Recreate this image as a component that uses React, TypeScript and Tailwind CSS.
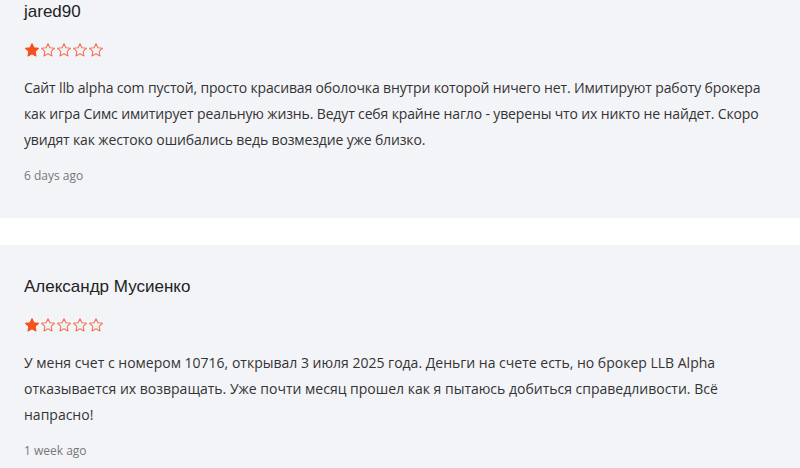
const reviews = [
  {
    name: 'jared90',
    rating: 1,
    text: 'Сайт llb alpha com пустой, просто красивая оболочка внутри которой ничего нет. Имитируют работу брокера как игра Симс имитирует реальную жизнь. Ведут себя крайне нагло - уверены что их никто не найдет. Скоро увидят как жестоко ошибались ведь возмездие уже близко.',
    date: '6 days ago',
    tight: true,
  },
  {
    name: 'Александр Мусиенко',
    rating: 1,
    text: 'У меня счет с номером 10716, открывал 3 июля 2025 года. Деньги на счете есть, но брокер LLB Alpha отказывается их возвращать. Уже почти месяц прошел как я пытаюсь добиться справедливости. Всё напрасно!',
    date: '1 week ago',
    tight: false,
  },
]

function Star({ filled }: { filled: boolean }) {
  return (
    <svg width="16" height="16" viewBox="0 0 24 24" className="shrink-0">
      <path
        d="M12 2.5l2.9 6.2 6.8.8-5 4.7 1.3 6.7L12 17.6l-6 3.3 1.3-6.7-5-4.7 6.8-.8z"
        fill={filled ? '#f4511e' : 'none'}
        stroke={filled ? '#f4511e' : '#f07356'}
        strokeWidth="1.6"
        strokeLinejoin="round"
      />
    </svg>
  )
}

export default function App() {
  return (
    <div className="w-[800px] h-[468px] overflow-hidden bg-white">
      <div className="-mt-[30px] flex flex-col gap-[27px]">
        {reviews.map((r, i) => (
          <div key={i} className="bg-[#f3f4f8] px-6 pt-[30px] pb-[33px]">
            <h3 className="text-[17px] leading-6 text-[#222] font-['Liberation_Sans',Arial,sans-serif]">
              {r.name}
            </h3>
            <div className="mt-[18px] flex">
              {[1, 2, 3, 4, 5].map((n) => (
                <Star key={n} filled={n <= r.rating} />
              ))}
            </div>
            <p
              className={
                r.tight
                  ? "mt-[17px] text-[14px] leading-[26px] tracking-[-0.14px] text-[#333] font-['Open_Sans',sans-serif]"
                  : "mt-[17px] text-[14px] leading-[26px] text-[#333] font-['Open_Sans',sans-serif]"
              }
            >
              {r.text}
            </p>
            <div className="mt-[14px] text-[12px] leading-[18px] text-[#777] font-['Open_Sans',sans-serif]">
              {r.date}
            </div>
          </div>
        ))}
      </div>
    </div>
  )
}
